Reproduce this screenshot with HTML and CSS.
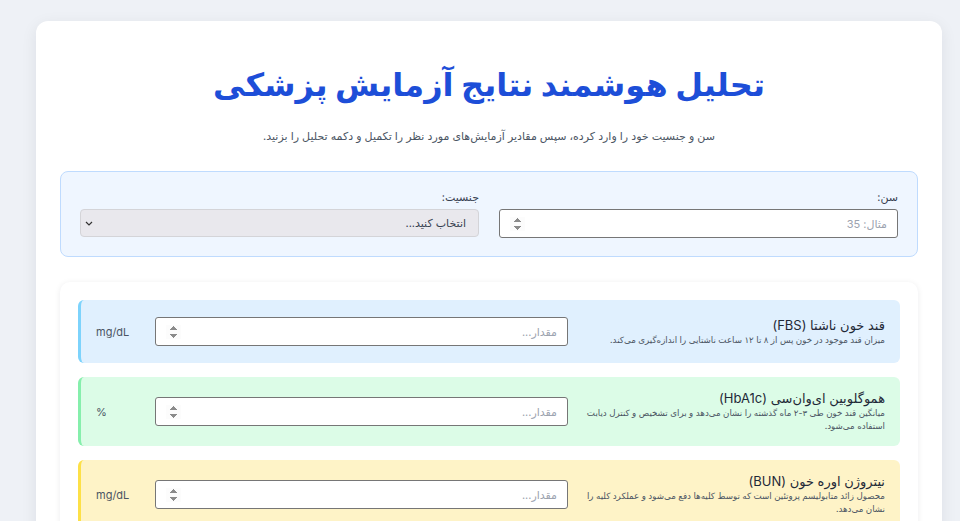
FILE: index.html
```html
<!DOCTYPE html>
<html lang="fa" dir="rtl">
<head>
  <meta charset="UTF-8">
  <meta name="viewport" content="width=device-width, initial-scale=1.0">
  <title>تحلیل هوشمند نتایج آزمایش پزشکی</title>
  <link rel="stylesheet" href="styles.css">
</head>
<body>

  <div class="container">
    <h1>تحلیل هوشمند نتایج آزمایش پزشکی</h1>
    <p class="subtitle">سن و جنسیت خود را وارد کرده، سپس مقادیر آزمایش‌های مورد نظر را تکمیل و دکمه تحلیل را بزنید.</p>

    <div class="profile-box">
      <div class="field">
        <label for="age">سن:</label>
        <input type="number" id="age" class="form-input" placeholder="مثال: 35">
      </div>
      <div class="field">
        <label for="gender">جنسیت:</label>
        <div class="select-wrap">
          <select id="gender" class="form-select">
            <option value="">انتخاب کنید...</option>
            <option value="male">مرد</option>
            <option value="female">زن</option>
          </select>
          <svg class="select-arrow" width="8" height="5" viewBox="0 0 8 5">
            <path d="M1 1l3 3 3-3" fill="none" stroke="#333" stroke-width="1.2"/>
          </svg>
        </div>
      </div>
    </div>

    <div class="tests-card">
      <div class="test-item blue">
        <div class="test-info">
          <h3>قند خون ناشتا (FBS)</h3>
          <p>میزان قند موجود در خون پس از ۸ تا ۱۲ ساعت ناشتایی را اندازه‌گیری می‌کند.</p>
        </div>
        <input type="number" class="form-input" placeholder="مقدار...">
        <span class="unit">mg/dL</span>
      </div>

      <div class="test-item green">
        <div class="test-info">
          <h3>هموگلوبین ای‌وان‌سی (HbA1c)</h3>
          <p>میانگین قند خون طی ۳-۲ ماه گذشته را نشان می‌دهد و برای تشخیص و کنترل دیابت استفاده می‌شود.</p>
        </div>
        <input type="number" class="form-input" placeholder="مقدار...">
        <span class="unit">%</span>
      </div>

      <div class="test-item yellow">
        <div class="test-info">
          <h3>نیتروژن اوره خون (BUN)</h3>
          <p>محصول زائد متابولیسم پروتئین است که توسط کلیه‌ها دفع می‌شود و عملکرد کلیه را نشان می‌دهد.</p>
        </div>
        <input type="number" class="form-input" placeholder="مقدار...">
        <span class="unit">mg/dL</span>
      </div>

      <div class="test-item red">
        <div class="test-info">
          <h3>کراتینین (Creatinine)</h3>
          <p>شاخص مهمی برای ارزیابی عملکرد کلیه‌ها و میزان فیلتراسیون خون است.</p>
        </div>
        <input type="number" class="form-input" placeholder="مقدار...">
        <span class="unit">mg/dL</span>
      </div>
    </div>
  </div>

</body>
</html>
```

FILE: styles.css
```css
body {
  font-family: 'Inter', 'DejaVu Sans', sans-serif;
  margin: 0;
  padding: 21px 18px 40px 36px;
  background-color: #eef1f6;
  color: #1f2937;
}

.container {
  background-color: #fff;
  border-radius: 12px;
  box-shadow: 0 4px 16px rgba(15, 23, 42, 0.08);
  padding: 24px 24px 30px;
}

h1 {
  text-align: center;
  color: #1d4ed8;
  font-size: 32px;
  font-weight: bold;
  margin: 16px 0 0;
  line-height: 1.5;
}

.subtitle {
  text-align: center;
  color: #4b5563;
  font-size: 11px;
  margin: 20px 0 28px;
}

/* سن و جنسیت */
.profile-box {
  display: grid;
  grid-template-columns: 1fr 1fr;
  gap: 20px;
  background-color: #eff6ff;
  border: 1px solid #bfdbfe;
  border-radius: 8px;
  padding: 18px 19px 18px;
}

.field label {
  display: block;
  font-size: 11px;
  color: #374151;
  margin-bottom: 5px;
  line-height: 14px;
}

.form-input {
  box-sizing: border-box;
  width: 100%;
  height: 29px;
  padding: 4px 10px;
  font-family: inherit;
  font-size: 11px;
  border: 1px solid #767676;
  border-radius: 3px;
  background-color: #fff;
}

.form-input::placeholder {
  color: #9ca3af;
}

.form-input::-webkit-inner-spin-button {
  opacity: 1;
}

.select-wrap {
  position: relative;
}

.form-select {
  box-sizing: border-box;
  width: 100%;
  height: 28px;
  padding: 0 12px 0 24px;
  font-family: inherit;
  font-size: 11px;
  color: #374151;
  border: 1px solid #d4d4d8;
  border-radius: 4px;
  background-color: #e9e8ed;
  appearance: none;
  -webkit-appearance: none;
}

.select-arrow {
  position: absolute;
  left: 5px;
  top: 12px;
  pointer-events: none;
}

/* کارت آزمایش‌ها */
.tests-card {
  margin-top: 25px;
  background-color: #fff;
  border-radius: 10px;
  box-shadow: 0 1px 6px rgba(15, 23, 42, 0.08);
  padding: 18px;
  display: flex;
  flex-direction: column;
  gap: 14px;
}

.test-item {
  display: flex;
  align-items: center;
  padding: 13px 15px 13px 15px;
  border-radius: 6px;
  border-left: 3px solid transparent;
  min-height: 37px;
}

.test-item.blue {
  background-color: #e0f0fe;
  border-left-color: #7dd3fc;
}

.test-item.green {
  background-color: #dcfce7;
  border-left-color: #86efac;
}

.test-item.yellow {
  background-color: #fef3c7;
  border-left-color: #fde047;
}

.test-item.red {
  background-color: #fee2e2;
  border-left-color: #fca5a5;
}

.test-info {
  width: 310px;
  flex-shrink: 0;
  margin-left: 7px;
}

.test-info h3 {
  margin: 0 0 1px;
  font-size: 13px;
  font-weight: normal;
  color: #1f2937;
  line-height: 16px;
}

.test-info p {
  margin: 0;
  font-size: 8.7px;
  color: #4b5563;
  line-height: 13px;
}

.test-item .form-input {
  flex: 1;
}

.unit {
  width: 59px;
  flex-shrink: 0;
  text-align: left;
  font-size: 11px;
  color: #4b5563;
}
```
